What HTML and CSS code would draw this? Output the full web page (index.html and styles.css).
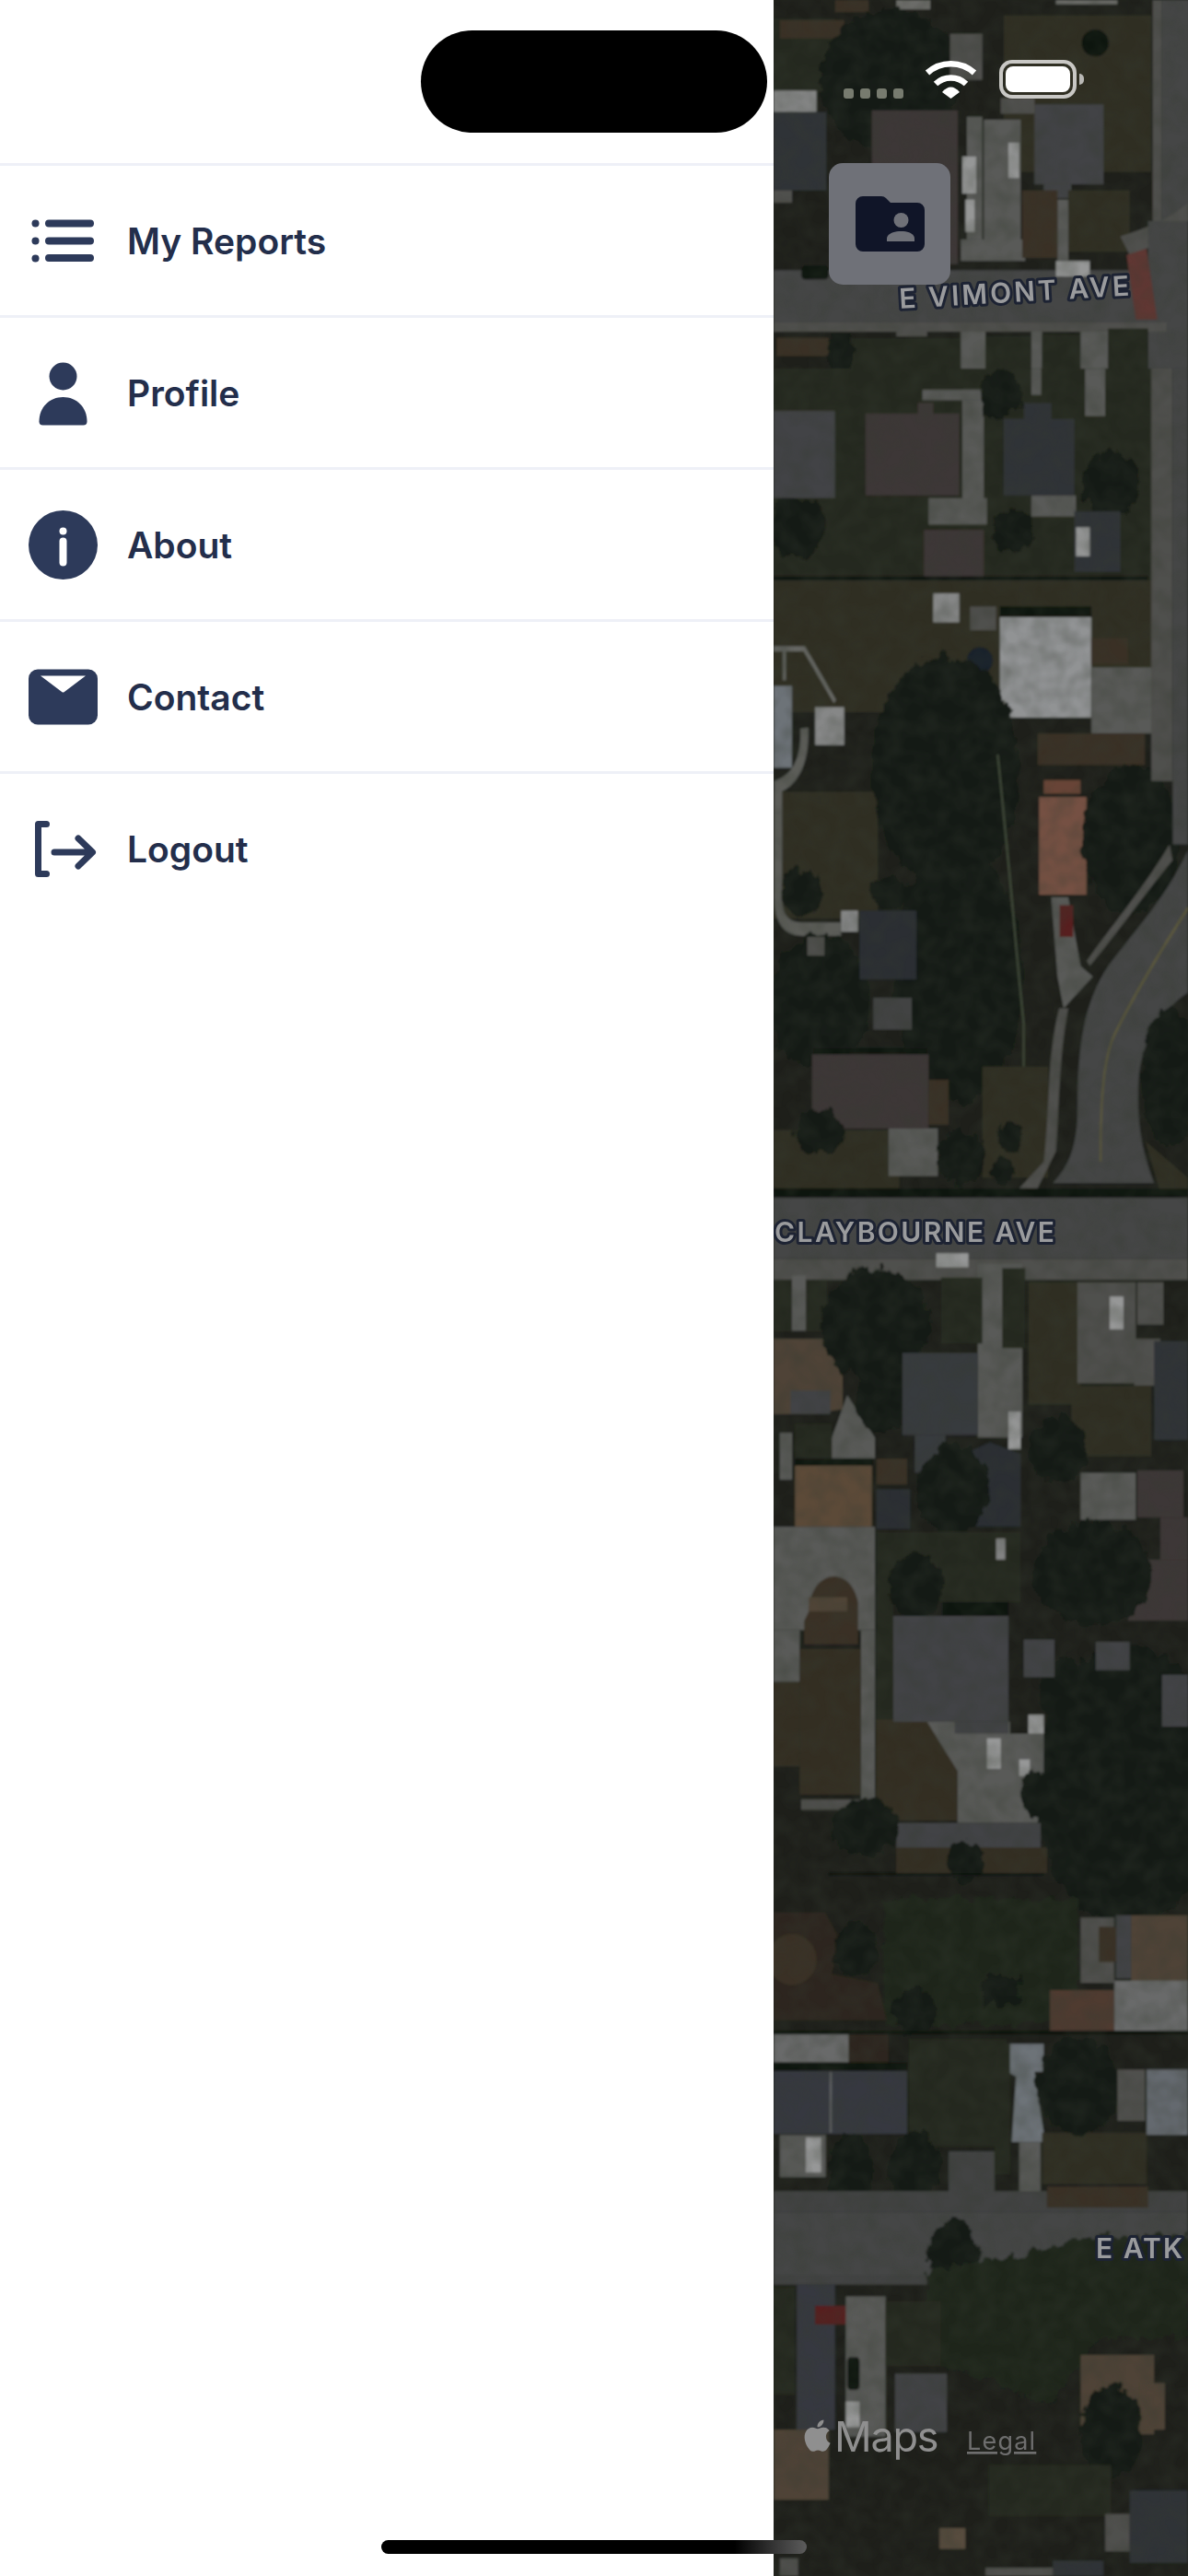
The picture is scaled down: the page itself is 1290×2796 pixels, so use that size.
FILE: index.html
```html
<!DOCTYPE html>
<html lang="en">
<head>
<meta charset="utf-8">
<title>Menu</title>
<link rel="stylesheet" href="styles.css">
</head>
<body>
<div class="screen">
  <nav class="drawer">
    <div class="drawer-head"></div>
    <a class="item">
      <svg class="item-icon" viewBox="0 0 75 75"><g class="ink"><circle cx="7.5" cy="18.5" r="4"/><circle cx="7.5" cy="37.5" r="4"/><circle cx="7.5" cy="56.5" r="4"/><rect x="18" y="14.5" width="53" height="8" rx="4"/><rect x="18" y="33.5" width="53" height="8" rx="4"/><rect x="18" y="52" width="53" height="8" rx="4"/></g></svg>
      <span>My Reports</span>
    </a>
    <a class="item">
      <svg class="item-icon" viewBox="0 0 75 75"><g class="ink"><circle cx="37.5" cy="19.5" r="15"/><path d="M11.5 68.5C11.5 53 23 42 37.5 42S63.5 53 63.5 68.5A4 4 0 0 1 59.5 72.5H15.5A4 4 0 0 1 11.5 68.5Z"/></g></svg>
      <span>Profile</span>
    </a>
    <a class="item">
      <svg class="item-icon" viewBox="0 0 75 75"><circle class="ink" cx="37.5" cy="37.5" r="37.5"/><circle class="paper" cx="37.5" cy="22.5" r="4"/><rect class="paper" x="33.5" y="29.5" width="8" height="31" rx="4"/></svg>
      <span>About</span>
    </a>
    <a class="item">
      <svg class="item-icon" viewBox="0 0 75 75"><rect class="ink" x="0" y="7.5" width="75" height="60" rx="10"/><path class="paper" d="M13 14.5H62L38.5 32.200Q37.500 33 36.500 32.200Z"/></svg>
      <span>Contact</span>
    </a>
    <a class="item">
      <svg class="item-icon" viewBox="0 0 75 75"><g class="ink-line"><path d="M19.500 10.500H10.500V64.500H19.500"/><path d="M28 41H68M54 26L69.500 41L54 56"/></g></svg>
      <span>Logout</span>
    </a>
  </nav>

  <main class="map">
    <svg class="map-art" viewBox="840 0 450 2796" preserveAspectRatio="none">
      <defs>
        <filter id="soft" x="0" y="0" width="100%" height="100%"><feGaussianBlur stdDeviation="1.1"/></filter>
        <filter id="mottle" x="0" y="0" width="100%" height="100%">
          <feTurbulence type="fractalNoise" baseFrequency="0.05" numOctaves="2" seed="7"/>
          <feColorMatrix type="matrix" values="0 0 0 0 0.05  0 0 0 0 0.06  0 0 0 0 0.04  0.6 0 0 0 -0.2"/>
        </filter>
        <filter id="rough" x="-20%" y="-20%" width="140%" height="140%">
          <feTurbulence type="fractalNoise" baseFrequency="0.03" numOctaves="3" seed="3" result="n"/>
          <feDisplacementMap in="SourceGraphic" in2="n" scale="40" xChannelSelector="R" yChannelSelector="G"/>
        </filter>
      </defs>
      <g filter="url(#soft)">
        <rect class="tree" x="840" y="0" width="450" height="2796"/>
        <!-- top block -->
        <g transform="translate(780 0) scale(0.3333 0.3333)">
          <rect class="dry" x="930" y="50" width="480" height="510"/>
          <rect class="lawn" x="180" y="60" width="200" height="240"/>
          <rect class="mud" x="380" y="0" width="110" height="40"/>
          <rect class="pale" x="580" y="0" width="110" height="30"/>
          <rect class="pale" x="1100" y="0" width="200" height="14"/>
          <rect class="mud" x="200" y="65" width="210" height="60"/>
          <ellipse class="black" cx="1228" cy="140" rx="44" ry="44"/>
          <ellipse class="tree2" cx="560" cy="260" rx="230" ry="230"/>
          <rect class="light" x="180" y="295" width="140" height="70"/>
          <rect class="slate" x="180" y="365" width="172" height="255"/>
          <rect class="conc2" x="180" y="620" width="60" height="40"/>
          <rect class="conc2" x="755" y="110" width="105" height="150"/>
          <rect class="roofb" x="500" y="360" width="280" height="500"/>
          <rect class="conc" x="810" y="380" width="50" height="400"/>
          <rect class="conc" x="865" y="390" width="120" height="440"/>
          <rect class="conc" x="790" y="780" width="210" height="70"/>
          <rect class="grey" x="1030" y="340" width="225" height="260"/>
          <rect class="grey" x="1060" y="600" width="90" height="45"/>
          <rect class="conc2" x="920" y="320" width="110" height="50"/>
          <rect class="mud" x="990" y="620" width="115" height="220"/>
          <rect class="dry" x="1140" y="620" width="200" height="200"/>
          <rect class="conc" x="1105" y="650" width="35" height="200"/>
          <rect class="car" x="795" y="510" width="45" height="120"/>
          <rect class="car" x="805" y="650" width="30" height="105"/>
          <rect class="car" x="945" y="465" width="35" height="115"/>
          <rect class="conc2" x="1415" y="0" width="30" height="720"/>
          <rect class="road" x="1445" y="0" width="90" height="720"/>
          <path class="conc2" d="M1310 770C1400 740 1460 720 1530 660V760L1340 830Z"/>
          <rect class="road" x="1400" y="720" width="130" height="480"/>
          <rect class="road" x="180" y="880" width="1240" height="170"/>
          <rect class="black" x="270" y="865" width="90" height="45" rx="14"/>
          <rect class="car" x="1100" y="850" width="110" height="50"/>
          <path class="brick" d="M1330 830L1395 810L1430 1040H1360Z"/>
          <rect class="conc2" x="180" y="1050" width="1280" height="30"/>
          <rect class="lawn" x="420" y="1100" width="370" height="100"/>
          <rect class="conc" x="790" y="1080" width="80" height="120"/>
          <rect class="lawn" x="870" y="1095" width="150" height="105"/>
          <rect class="conc" x="1020" y="1080" width="35" height="120"/>
          <rect class="lawn" x="1055" y="1090" width="125" height="110"/>
          <rect class="conc" x="1180" y="1080" width="90" height="120"/>
          <rect class="lawn" x="1270" y="1070" width="130" height="130"/>
          <rect class="conc2" x="580" y="1060" width="100" height="35"/>
          <rect class="mud" x="190" y="1100" width="170" height="60"/>
          <ellipse class="tree2" cx="400" cy="1150" rx="45" ry="70"/>
        </g>
        <!-- second block -->
        <g transform="translate(840 400) scale(0.3333 0.574)">
          <rect class="lawn" x="0" y="0" width="1260" height="400"/>
          <rect class="dry" x="0" y="400" width="1260" height="250"/>
          <rect class="dry" x="0" y="800" width="340" height="240"/>
          <ellipse class="tree2" cx="80" cy="300" rx="90" ry="60"/>
          <rect class="grey" x="0" y="80" width="200" height="165"/>
          <path class="roofb" d="M300 85H470V65H520V85H605V240H300Z"/>
          <rect class="conc" x="505" y="245" width="190" height="50"/>
          <rect class="conc" x="615" y="40" width="70" height="210"/>
          <rect class="conc" x="485" y="40" width="200" height="20"/>
          <rect class="conc" x="840" y="0" width="32" height="50"/>
          <rect class="conc" x="1015" y="0" width="65" height="90"/>
          <rect class="conc" x="840" y="240" width="145" height="40"/>
          <path class="slate" d="M750 95H815V65H905V95H980V240H750Z"/>
          <ellipse class="tree2" cx="1100" cy="220" rx="95" ry="60"/>
          <ellipse class="tree2" cx="740" cy="50" rx="70" ry="45"/>
          <ellipse class="tree2" cx="780" cy="310" rx="70" ry="40"/>
          <rect class="slate" x="980" y="270" width="150" height="115"/>
          <rect class="car" x="985" y="300" width="45" height="55"/>
          <rect class="roofb" x="490" y="305" width="195" height="90"/>
          <rect class="black" x="0" y="393" width="1220" height="7"/>
          <rect class="light" x="520" y="425" width="85" height="55"/>
          <rect class="conc2" x="640" y="450" width="85" height="45"/>
          <rect class="black" x="737" y="450" width="298" height="22"/>
          <rect class="white" x="737" y="470" width="298" height="190"/>
          <ellipse class="pool" cx="672" cy="552" rx="42" ry="25"/>
          <rect class="conc" x="1035" y="565" width="260" height="125"/>
          <rect class="mud" x="1035" y="510" width="120" height="50"/>
          <rect class="mud" x="860" y="690" width="350" height="60"/>
          <path class="strip" d="M0 530H100L200 630M35 530V590"/>
          <rect class="blue" x="0" y="600" width="60" height="155"/>
          <rect class="light" x="135" y="640" width="95" height="72"/>
          <path class="strip2" d="M100 680C105 750 60 780 15 790V1000Q15 1060 90 1060H220"/>
          <ellipse class="tree2" cx="560" cy="760" rx="240" ry="220"/>
          <ellipse class="tree2" cx="600" cy="1150" rx="210" ry="240"/>
          <ellipse class="tree2" cx="150" cy="1200" rx="160" ry="130"/>
          <ellipse class="tree2" cx="90" cy="990" rx="70" ry="45"/>
          <ellipse class="tree2" cx="380" cy="990" rx="70" ry="28"/>
          <path class="strip3" d="M730 730C770 950 790 1100 815 1240V1530"/>
          <rect class="brick2" x="880" y="778" width="120" height="26"/>
          <rect class="orange" x="865" y="810" width="155" height="185"/>
          <ellipse class="tree2" cx="1165" cy="890" rx="160" ry="140"/>
          <path class="conc" d="M905 1000H960L1000 1130L1040 1150L945 1210L925 1150Z"/>
          <rect class="redcar" x="932" y="1015" width="44" height="60"/>
          <rect class="light" x="220" y="1025" width="55" height="40"/>
          <rect class="conc2" x="110" y="1075" width="55" height="35"/>
          <rect class="slate2" x="280" y="1025" width="185" height="130"/>
          <rect class="conc3" x="325" y="1190" width="125" height="60"/>
          <rect class="dry" x="680" y="1320" width="215" height="210"/>
          <rect class="dry" x="0" y="1440" width="410" height="110"/>
          <rect class="black" x="130" y="1285" width="370" height="12"/>
          <rect class="roofb" x="125" y="1297" width="380" height="140"/>
          <rect class="mud" x="505" y="1345" width="65" height="85"/>
          <rect class="conc" x="375" y="1437" width="160" height="90"/>
          <ellipse class="tree2" cx="610" cy="1490" rx="80" ry="50"/>
          <ellipse class="tree2" cx="745" cy="1515" rx="40" ry="24"/>
          <ellipse class="tree2" cx="770" cy="1450" rx="40" ry="32"/>
          <ellipse class="tree2" cx="150" cy="1445" rx="80" ry="45"/>
          <rect class="conc2" x="1230" y="0" width="70" height="780"/>
          <rect class="road" x="1300" y="0" width="50" height="900"/>
          <path class="conc2" d="M1290 900L1300 930C1200 1000 1130 1060 1030 1130L1020 1120C1120 1040 1220 970 1290 900Z"/>
          <path class="conc2" d="M930 1210H960C930 1300 930 1400 920 1480L860 1550H800L880 1500C900 1400 890 1300 930 1210Z"/>
          <path class="road" d="M1350 910V1180C1270 1210 1200 1270 1190 1340C1180 1420 1200 1480 1240 1540H910C960 1510 990 1470 990 1400C990 1280 1010 1200 1090 1130C1180 1060 1280 1000 1350 910Z"/>
          <path class="yellow" d="M1350 1020C1250 1110 1170 1190 1110 1260C1070 1310 1065 1400 1065 1500"/>
          <ellipse class="tree2" cx="1290" cy="1340" rx="90" ry="130"/>
          <path class="dry" d="M1210 1460L1350 1530V1560H1260Z"/>
        </g>
        <!-- third block -->
        <g transform="translate(840 1300) scale(0.3333 0.5102)">
          <rect class="black" x="0" y="-20" width="1350" height="20"/>
          <rect class="road" x="0" y="0" width="1350" height="130"/>
          <rect class="conc2" x="0" y="130" width="1350" height="45"/>
          <rect class="lawn" x="0" y="175" width="60" height="110"/>
          <rect class="conc" x="60" y="165" width="45" height="118"/>
          <rect class="lawn" x="105" y="175" width="70" height="110"/>
          <rect class="car" x="530" y="118" width="105" height="30"/>
          <path class="house" d="M0 300H160L225 380V450L130 460H0Z"/>
          <rect class="grey" x="55" y="410" width="130" height="50"/>
          <path class="conc" d="M240 420L330 510V555H165Z"/>
          <rect class="conc" x="20" y="500" width="40" height="100"/>
          <rect class="lawn" x="70" y="480" width="120" height="75"/>
          <rect class="black" x="70" y="555" width="255" height="15"/>
          <rect class="house2" x="70" y="570" width="250" height="130"/>
          <rect class="conc" x="0" y="700" width="330" height="220"/>
          <path class="mud" d="M115 880C120 790 250 780 275 860V950H100V900Z"/>
          <rect class="dirt" x="115" y="850" width="125" height="30"/>
          <rect class="conc" x="0" y="920" width="85" height="110"/>
          <rect class="dirt2" x="85" y="960" width="200" height="310"/>
          <rect class="dirt2" x="0" y="1030" width="85" height="180"/>
          <rect class="conc" x="285" y="920" width="45" height="370"/>
          <rect class="conc2" x="90" y="1280" width="230" height="22"/>
          <ellipse class="tree2" cx="330" cy="270" rx="175" ry="120"/>
          <ellipse class="tree2" cx="350" cy="430" rx="80" ry="70"/>
          <rect class="conc" x="665" y="140" width="145" height="370"/>
          <rect class="dry" x="830" y="180" width="170" height="260"/>
          <rect class="lawn" x="545" y="170" width="135" height="140"/>
          <rect class="lawn" x="745" y="150" width="75" height="170"/>
          <rect class="slate3" x="420" y="330" width="245" height="175"/>
          <rect class="slate3" x="460" y="505" width="100" height="80"/>
          <rect class="car" x="765" y="455" width="40" height="80"/>
          <path class="slate2" d="M620 545L705 520L805 545V700H620Z"/>
          <rect class="mud" x="335" y="555" width="100" height="55"/>
          <rect class="slate2" x="335" y="620" width="110" height="85"/>
          <ellipse class="tree2" cx="585" cy="620" rx="120" ry="95"/>
          <rect class="lawn" x="335" y="710" width="470" height="150"/>
          <rect class="lawn" x="335" y="860" width="55" height="250"/>
          <rect class="conc2" x="990" y="180" width="190" height="215"/>
          <rect class="car" x="1095" y="210" width="45" height="70"/>
          <rect class="conc2" x="1185" y="180" width="85" height="90"/>
          <rect class="conc2" x="1175" y="300" width="85" height="100"/>
          <rect class="dry" x="970" y="400" width="260" height="150"/>
          <rect class="slate" x="1240" y="305" width="110" height="210"/>
          <ellipse class="tree2" cx="930" cy="535" rx="95" ry="70"/>
          <rect class="conc" x="1000" y="585" width="180" height="100"/>
          <rect class="roofb" x="1185" y="580" width="150" height="100"/>
          <rect class="roofb" x="1260" y="680" width="90" height="90"/>
          <rect class="roofb" x="1155" y="770" width="195" height="130"/>
          <ellipse class="tree2" cx="1040" cy="800" rx="190" ry="110"/>
          <ellipse class="tree2" cx="1150" cy="1250" rx="300" ry="300"/>
          <ellipse class="tree2" cx="940" cy="1050" rx="70" ry="70"/>
          <rect class="light" x="725" y="725" width="30" height="45"/>
          <ellipse class="tree2" cx="465" cy="825" rx="85" ry="70"/>
          <rect class="grey" x="815" y="940" width="100" height="80"/>
          <rect class="grey" x="1050" y="945" width="110" height="60"/>
          <rect class="grey" x="1265" y="1015" width="85" height="110"/>
          <rect class="black" x="550" y="860" width="215" height="30"/>
          <rect class="dirt2" x="335" y="1110" width="265" height="215"/>
          <path class="conc" d="M500 1115H770V1140H830L880 1100V1240L860 1330H600V1220Z"/>
          <rect class="grey" x="390" y="890" width="375" height="225"/>
          <rect class="grey" x="590" y="1115" width="175" height="25"/>
          <rect class="car" x="695" y="1150" width="45" height="65"/>
          <rect class="car" x="830" y="1100" width="50" height="40"/>
          <rect class="car" x="800" y="1195" width="35" height="35"/>
          <ellipse class="tree2" cx="860" cy="1270" rx="55" ry="50"/>
          <rect class="grey" x="400" y="1330" width="470" height="55"/>
          <rect class="dirt2" x="400" y="1385" width="490" height="50"/>
          <ellipse class="tree2" cx="625" cy="1415" rx="60" ry="40"/>
          <ellipse class="tree2" cx="300" cy="1340" rx="110" ry="60"/>
          <rect class="black" x="180" y="1435" width="700" height="5"/>
        </g>
        <!-- bottom block -->
        <g transform="translate(840 2000) scale(0.3333 0.5077)">
          <rect class="dirt2" x="400" y="10" width="490" height="55"/>
          <ellipse class="tree2" cx="625" cy="40" rx="60" ry="40"/>
          <rect class="black" x="180" y="65" width="700" height="5"/>
          <rect class="tree3" x="360" y="120" width="630" height="270"/>
          <path class="dirt3" d="M0 150H170L220 210L190 280L340 300L370 380H0Z"/>
          <ellipse class="mud" cx="60" cy="250" rx="80" ry="55"/>
          <ellipse class="tree2" cx="270" cy="230" rx="70" ry="60"/>
          <ellipse class="tree2" cx="460" cy="360" rx="70" ry="50"/>
          <rect class="tree2" x="680" y="290" width="120" height="60"/>
          <rect class="conc2" x="1000" y="160" width="110" height="140"/>
          <rect class="house" x="1165" y="155" width="185" height="145"/>
          <rect class="grey" x="1115" y="155" width="50" height="135"/>
          <rect class="mud" x="1060" y="180" width="55" height="75"/>
          <rect class="roofb2" x="900" y="315" width="210" height="90"/>
          <rect class="light2" x="1110" y="295" width="240" height="110"/>
          <rect class="black" x="0" y="402" width="1350" height="8"/>
          <rect class="light2" x="0" y="410" width="245" height="60"/>
          <rect class="dirt3" x="245" y="410" width="130" height="60"/>
          <rect class="black" x="0" y="470" width="435" height="18"/>
          <rect class="lawn" x="440" y="420" width="320" height="230"/>
          <rect class="slate4" x="0" y="488" width="435" height="135"/>
          <rect class="light2" x="183" y="490" width="6" height="130"/>
          <rect class="conc" x="20" y="625" width="150" height="90"/>
          <rect class="car" x="105" y="630" width="50" height="75"/>
          <path class="blue" d="M760 430H880V490L850 490L885 640H775L790 500L760 490Z"/>
          <rect class="conc" x="800" y="640" width="70" height="130"/>
          <rect class="dry" x="875" y="620" width="340" height="110"/>
          <ellipse class="tree2" cx="990" cy="520" rx="130" ry="105"/>
          <ellipse class="tree2" cx="250" cy="700" rx="70" ry="75"/>
          <ellipse class="tree2" cx="460" cy="690" rx="85" ry="70"/>
          <rect class="conc2" x="1120" y="485" width="90" height="110"/>
          <rect class="blue2" x="1215" y="485" width="135" height="140"/>
          <rect class="lawn" x="720" y="430" width="50" height="280"/>
          <rect class="conc3" x="570" y="660" width="150" height="90"/>
          <rect class="conc3" x="0" y="745" width="1350" height="45"/>
          <rect class="mud" x="890" y="735" width="330" height="45"/>
          <rect class="road" x="0" y="790" width="1350" height="140"/>
          <rect class="conc3" x="0" y="925" width="500" height="20"/>
          <ellipse class="tree2" cx="585" cy="880" rx="85" ry="75"/>
          <path class="tree3" d="M500 920C700 880 900 880 1040 840H1350V1060H1060L900 1200L500 1100Z"/>
          <rect class="slate4" x="75" y="945" width="125" height="310"/>
          <rect class="conc" x="235" y="970" width="130" height="300"/>
          <rect class="black" x="240" y="1100" width="40" height="70" rx="10"/>
          <rect class="car" x="235" y="1195" width="45" height="55"/>
          <rect class="redcar" x="135" y="990" width="100" height="40"/>
          <rect class="lawn" x="0" y="950" width="70" height="230"/>
          <rect class="lawn" x="365" y="980" width="180" height="140"/>
          <rect class="grey" x="395" y="1135" width="170" height="125"/>
          <rect class="house" x="0" y="1255" width="180" height="150"/>
          <rect class="house" x="1000" y="1095" width="240" height="170"/>
          <rect class="house" x="1190" y="1155" width="85" height="100"/>
          <ellipse class="tree2" cx="1100" cy="1260" rx="100" ry="100"/>
          <rect class="lawn" x="700" y="1330" width="400" height="110"/>
          <rect class="slate" x="1160" y="1385" width="190" height="155"/>
          <rect class="conc2" x="1080" y="1435" width="80" height="80"/>
          <rect class="mud2" x="540" y="1465" width="85" height="45"/>
          <rect class="conc2" x="690" y="1550" width="220" height="18"/>
          <rect class="slate" x="910" y="1535" width="165" height="33"/>
          <rect class="conc2" x="20" y="1530" width="60" height="38"/>
        </g>
      </g>
      <rect x="840" y="0" width="450" height="2796" filter="url(#mottle)"/>
      <rect class="scrim" x="840" y="0" width="450" height="2796"/>
      <text class="label" transform="translate(977 335) rotate(-3.3)" textLength="250">E VIMONT AVE</text>
      <text class="label" x="841" y="1348" textLength="304">CLAYBOURNE AVE</text>
      <text class="label" x="1190" y="2451" textLength="94">E ATK</text>
      <path class="attrib" transform="translate(867 2623) scale(1.72)" d="M18.710 19.500c-.83 1.240-1.710 2.450-3.050 2.470-1.340.03-1.770-.79-3.290-.79-1.530 0-2 .77-3.270.82-1.310.05-2.300-1.320-3.140-2.530C4.250 17 2.940 12.450 4.700 9.390c.87-1.520 2.430-2.480 4.120-2.510 1.280-.02 2.500.87 3.290.87.78 0 2.260-1.070 3.800-.91.65.03 2.470.26 3.640 1.980-.09.06-2.170 1.280-2.150 3.810.03 3.020 2.650 4.030 2.680 4.040-.03.07-.42 1.440-1.380 2.830M13 3.500c.73-.83 1.940-1.460 2.940-1.500.13 1.170-.34 2.350-1.040 3.190-.69.85-1.830 1.510-2.950 1.420-.15-1.150.41-2.350 1.050-3.110z"/>
      <text class="maps-word" x="906" y="2661">Maps</text>
      <text class="maps-legal" x="1050" y="2659">Legal</text>
    </svg>

    <div class="status">
      <div class="dots"><i></i><i></i><i></i><i></i></div>
      <svg class="wifi" viewBox="0 0 57 42"><g class="wifi-arc"><path d="M3 14A38 38 0 0 1 54 14"/><path d="M12 26A24 24 0 0 1 45 26"/></g><path class="wifi-dot" d="M19 35Q28.500 24 38 35L28.500 42Z"/></svg>
      <div class="battery"><div class="battery-fill"></div></div>
      <div class="battery-tip"></div>
    </div>

    <button class="float-btn" type="button">
      <svg class="float-icon" viewBox="0 0 75 60"><path class="folder" d="M8 0H28Q31 0 33 2L38 7H67A8 8 0 0 1 75 15V52A8 8 0 0 1 67 60H8A8 8 0 0 1 0 52V8A8 8 0 0 1 8 0Z"/><circle class="folder-hole" cx="49.500" cy="26" r="8"/><path class="folder-hole" d="M34 49V46C34 41 41 38 49.500 38S64 41 64 46V49Z"/></svg>
    </button>
  </main>

  <div class="island"></div>
  <div class="home-bar"></div>
</div>
</body>
</html>
```

FILE: styles.css
```css
* { box-sizing: border-box; }
html, body { margin: 0; padding: 0; background: #fff; }
.screen {
  position: relative;
  display: flex;
  width: 1290px;
  height: 2796px;
  overflow: hidden;
  font-family: Inter, "Liberation Sans", sans-serif;
}
.drawer { width: 840px; flex: none; background: #fff; }
.drawer-head { height: 180px; border-bottom: 3px solid #eef0f7; }
.item {
  display: flex;
  align-items: center;
  gap: 32px;
  height: 165px;
  padding-left: 31px;
  border-bottom: 3px solid #eef0f7;
  font-size: 39px;
  font-weight: 600;
  color: #232e4b;
}
.item:last-child { height: 162px; border-bottom: 0; }
.item-icon { width: 75px; height: 75px; flex: none; }
.ink { fill: #2d3a5a; }
.paper { fill: #fff; }
.ink-line {
  fill: none;
  stroke: #2d3a5a;
  stroke-width: 7;
  stroke-linecap: round;
  stroke-linejoin: round;
}

.map { position: relative; flex: 1; background: #23261e; overflow: hidden; }
.map-art { position: absolute; inset: 0; width: 100%; height: 100%; display: block; }
.scrim { fill: #101214; fill-opacity: 0.2; }

.tree { fill: #20231b; }
.tree2 { fill: #181c15; filter: url(#rough); }
.tree3 { fill: #222a1d; filter: url(#rough); }
.lawn { fill: #2b2e21; }
.dry { fill: #383627; }
.mud { fill: #443829; }
.mud2 { fill: #6a5a48; }
.dirt { fill: #61513f; }
.dirt2 { fill: #3c3627; }
.dirt3 { fill: #342b20; }
.conc { fill: #6c6c69; }
.conc2 { fill: #605f5b; }
.conc3 { fill: #505050; }
.pale { fill: #858480; }
.light { fill: #a4a4a4; }
.light2 { fill: #808080; }
.white { fill: #b2b3b5; }
.car { fill: #b8b8b8; }
.road { fill: #525253; }
.grey { fill: #505052; }
.slate { fill: #383b40; }
.slate2 { fill: #31353b; }
.slate3 { fill: #424449; }
.slate4 { fill: #3f424b; }
.blue { fill: #858b92; }
.blue2 { fill: #7a7f86; }
.roofb { fill: #4a3f3f; }
.roofb2 { fill: #5f4538; }
.house { fill: #5e503f; }
.house2 { fill: #6f5843; }
.orange { fill: #8f604f; }
.brick { fill: #753f3a; }
.brick2 { fill: #7f513f; }
.redcar { fill: #6a2222; }
.black { fill: #11120f; }
.pool { fill: #1d2530; }
.strip { fill: none; stroke: #7d7d78; stroke-width: 10; }
.strip2 { fill: none; stroke: #6f6f6b; stroke-width: 26; }
.strip3 { fill: none; stroke: #55604a; stroke-width: 6; }
.yellow { fill: none; stroke: #6f6a48; stroke-width: 7; }

.label {
  font-family: Inter, "Liberation Sans", sans-serif;
  font-size: 30px;
  font-weight: 600;
  fill: #9a9b9d;
  stroke: #1d2333;
  stroke-width: 6px;
  paint-order: stroke fill;
  stroke-linejoin: round;
}
.attrib { fill: #8f8f8f; }
.maps-word {
  font-family: Inter, "Liberation Sans", sans-serif;
  font-size: 45px;
  letter-spacing: -1.2px;
  fill: #8f8f8f;
}
.maps-legal {
  font-family: Inter, "Liberation Sans", sans-serif;
  font-size: 27px;
  letter-spacing: 1.2px;
  fill: #6e6e6e;
  text-decoration: underline;
}

.status {
  position: absolute;
  left: 76px;
  top: 65px;
  display: flex;
  align-items: flex-end;
  height: 42px;
}
.dots { display: flex; gap: 7px; margin-right: 23px; }
.dots i { width: 11px; height: 11px; border-radius: 3px; background: #777b6f; }
.wifi { width: 57px; height: 42px; flex: none; margin-right: 24px; }
.wifi-arc { fill: none; stroke: #fff; stroke-width: 6.5; }
.wifi-dot { fill: #fff; }
.battery {
  width: 84px;
  height: 42px;
  padding: 3px;
  border: 4px solid #c9c8c5;
  border-radius: 14px;
}
.battery-fill { width: 100%; height: 100%; background: #fff; border-radius: 8px; }
.battery-tip {
  align-self: center;
  width: 5px;
  height: 12px;
  margin-left: 3px;
  background: #b9b8b5;
  border-radius: 0 6px 6px 0;
}

.float-btn {
  position: absolute;
  left: 60px;
  top: 177px;
  display: flex;
  align-items: center;
  justify-content: center;
  width: 132px;
  height: 132px;
  padding: 0;
  border: 0;
  border-radius: 15px;
  background: #6f7178;
}
.float-icon { width: 75px; height: 60px; }
.folder { fill: #101528; }
.folder-hole { fill: #6f7178; }

.island {
  position: absolute;
  left: 457px;
  top: 33px;
  width: 376px;
  height: 111px;
  border-radius: 56px;
  background: #000;
}
.home-bar {
  position: absolute;
  left: 414px;
  top: 2757px;
  width: 462px;
  height: 15px;
  border-radius: 8px;
  background: linear-gradient(90deg, #000 0, #000 83%, #333 92%, #5c5c5c 100%);
}
```
